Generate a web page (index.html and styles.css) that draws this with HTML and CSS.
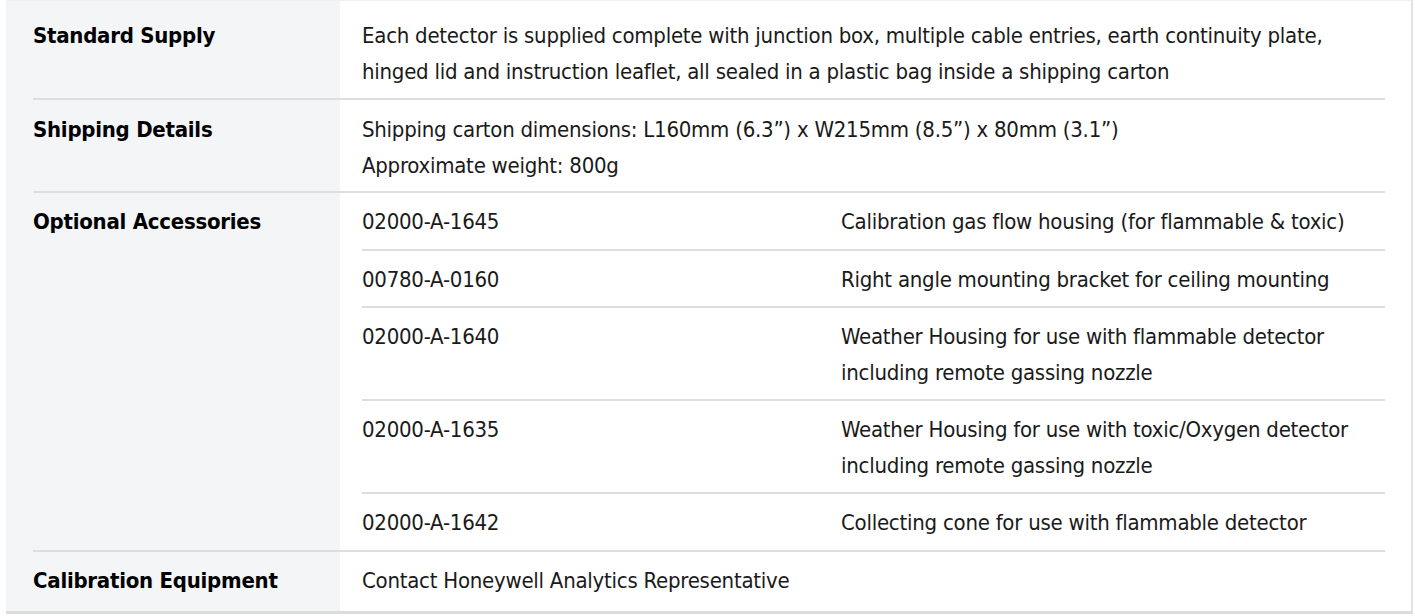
FILE: index.html
```html
<!DOCTYPE html>
<html lang="en">
<head>
<meta charset="utf-8">
<title>Specifications</title>
<link rel="stylesheet" href="styles.css">
</head>
<body>
<div class="spec">
  <div class="row first">
    <div class="label">Standard Supply</div>
    <div class="value">Each detector is supplied complete with junction box, multiple cable entries, earth continuity plate,<br>hinged lid and instruction leaflet, all sealed in a plastic bag inside a shipping carton</div>
  </div>
  <div class="row">
    <div class="label">Shipping Details</div>
    <div class="value">Shipping carton dimensions: L160mm (6.3”) x W215mm (8.5”) x 80mm (3.1”)<br>Approximate weight: 800g</div>
  </div>
  <div class="row accessories">
    <div class="label">Optional Accessories</div>
    <div class="value sub-list">
      <div class="sub-row"><div class="code">02000-A-1645</div><div class="desc">Calibration gas flow housing (for flammable &amp; toxic)</div></div>
      <div class="sub-row"><div class="code">00780-A-0160</div><div class="desc">Right angle mounting bracket for ceiling mounting</div></div>
      <div class="sub-row"><div class="code">02000-A-1640</div><div class="desc">Weather Housing for use with flammable detector<br>including remote gassing nozzle</div></div>
      <div class="sub-row"><div class="code">02000-A-1635</div><div class="desc">Weather Housing for use with toxic/Oxygen detector<br>including remote gassing nozzle</div></div>
      <div class="sub-row"><div class="code">02000-A-1642</div><div class="desc">Collecting cone for use with flammable detector</div></div>
    </div>
  </div>
  <div class="row last">
    <div class="label">Calibration Equipment</div>
    <div class="value">Contact Honeywell Analytics Representative</div>
  </div>
</div>
</body>
</html>
```

FILE: styles.css
```css
html, body {
  margin: 0;
  padding: 0;
  background: #ffffff;
}

body {
  font-family: "DejaVu Sans Condensed", "Liberation Sans", sans-serif;
  font-size: 22px;
  letter-spacing: -0.25px;
  line-height: 36px;
  color: #1a1a1a;
}

.spec {
  margin-left: 6px;
  width: 1407px;
  height: 614px;
  box-sizing: border-box;
  border-top: 1px solid #eef0f2;
  border-right: 2px solid #e2e2e2;
  border-bottom: 3px solid #dcdcdc;
  background: linear-gradient(to right, #f4f5f7 0, #f4f5f7 334px, #ffffff 334px);
  padding: 0 26px 0 27px;
  overflow: hidden;
}

.row {
  display: grid;
  grid-template-columns: 307px 1fr;
  border-bottom: 2px solid #dedede;
}

.row.last {
  border-bottom: none;
}

.label {
  font-weight: bold;
  color: #000000;
  padding: 12px 0 7px 0;
  white-space: nowrap;
}

.value {
  padding: 12px 0 7px 22px;
  white-space: nowrap;
}

.row.first .label,
.row.first .value {
  padding-top: 17px;
  padding-bottom: 8px;
}

.row.accessories .label {
  padding-top: 11px;
}

.row.last .label,
.row.last .value {
  padding-top: 11px;
  padding-bottom: 14px;
}

.value.sub-list {
  padding: 0 0 0 22px;
}

.sub-row {
  display: grid;
  grid-template-columns: 479px 1fr;
  line-height: 35.5px;
  padding: 11px 0 9px 0;
  border-bottom: 2px solid #dedede;
}

.sub-row:last-child {
  border-bottom: none;
}
```
